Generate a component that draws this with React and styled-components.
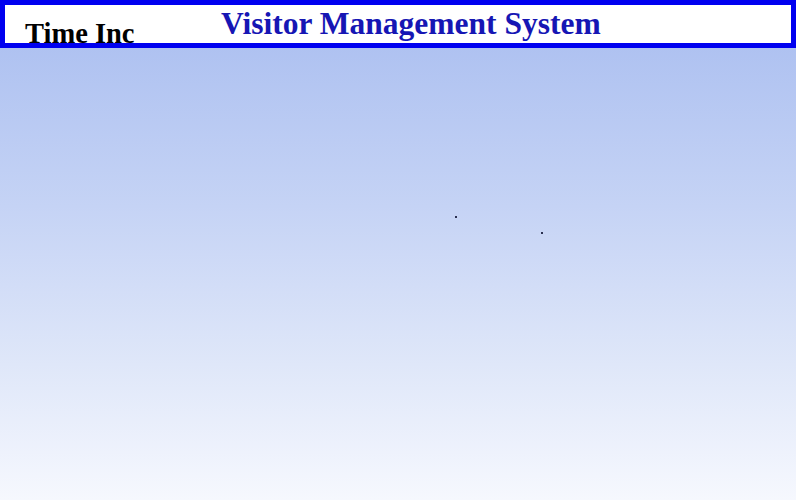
import styled, { createGlobalStyle } from "styled-components";

const GlobalStyle = createGlobalStyle`
	html, body {
		margin: 0;
		padding: 0;
	}
	body {
		font-family: "Liberation Serif", "DejaVu Serif", serif;
	}
`;

export default function App() {
	return (
		<>
			<GlobalStyle />
			<Page>
				<Header>
					<Company>Time Inc</Company>
					<Title>Visitor Management System</Title>
				</Header>
				<Canvas>
					<Speck x={455} y={168} />
					<Speck x={541} y={184} />
				</Canvas>
			</Page>
		</>
	);
}

const Page = styled.div`
	width: 796px;
	height: 500px;
	display: flex;
	flex-direction: column;
	overflow: hidden;
`;

const Header = styled.header`
	box-sizing: border-box;
	height: 48px;
	width: 796px;
	border: 5px solid #0000f0;
	background: #ffffff;
	display: flex;
	align-items: flex-start;
	overflow: hidden;
	flex-shrink: 0;
`;

const Company = styled.div`
	width: 216px;
	padding: 15px 0 0 20px;
	box-sizing: border-box;
	flex-shrink: 0;
	font-size: 28.5px;
	font-weight: 700;
	color: #000000;
	line-height: 1;
	white-space: nowrap;
`;

const Title = styled.h1`
	margin: 0;
	padding-top: 3px;
	font-size: 31.5px;
	font-weight: 700;
	color: #1616b4;
	line-height: 1;
	white-space: nowrap;
`;

const Canvas = styled.main`
	position: relative;
	flex: 1;
	background: linear-gradient(180deg, #afc2f1 0%, #c5d3f5 35%, #dfe7f9 70%, #f6f8fe 100%);
`;

const Speck = styled.span`
	position: absolute;
	left: ${({ x }) => x}px;
	top: ${({ y }) => y}px;
	width: 2px;
	height: 2px;
	background: #2a3050;
`;
